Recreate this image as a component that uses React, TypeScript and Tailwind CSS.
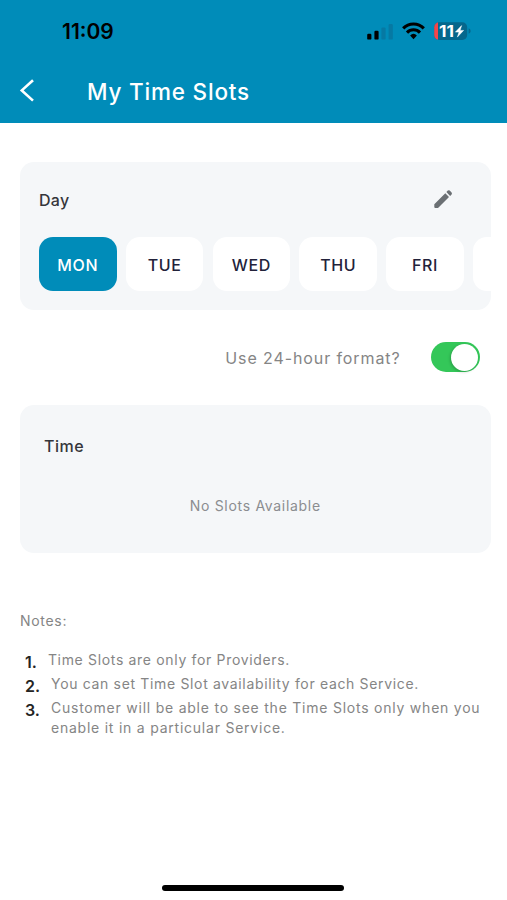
import { useState } from 'react';

const days = ['MON', 'TUE', 'WED', 'THU', 'FRI'];

const notes = [
  { text: 'Time Slots are only for Providers.', tracking: 'tracking-[0.67px]' },
  { text: 'You can set Time Slot availability for each Service.', tracking: 'tracking-[0.66px]' },
  {
    text: 'Customer will be able to see the Time Slots only when you enable it in a particular Service.',
    tracking: 'tracking-[0.77px]',
  },
];

function StatusIcons() {
  return (
    <svg width="106" height="20" viewBox="0 0 106 20" className="shrink-0">
      {/* Cellular signal, two of four bars */}
      <rect x="1.2" y="12.8" width="4.2" height="5.8" rx="1.2" fill="#000" />
      <rect x="8.4" y="9.8" width="4.2" height="8.8" rx="1.2" fill="#000" />
      <rect x="15.4" y="6.4" width="4.2" height="12.2" rx="1.2" fill="#0679a3" />
      <rect x="22.6" y="3" width="4.2" height="15.6" rx="1.2" fill="#0679a3" />
      {/* Wifi */}
      <g fill="none" stroke="#000" strokeWidth="3.1">
        <path d="M37.2 7.4a14.2 14.2 0 0 1 20.6 0" />
        <path d="M41 11.6a9 9 0 0 1 13 0" />
      </g>
      <path d="M47.5 18.2l-3.4-3.8a5 5 0 0 1 6.8 0z" fill="#000" />
      {/* Battery */}
      <clipPath id="battery">
        <rect x="68.2" y="1.2" width="33" height="17.8" rx="5" />
      </clipPath>
      <g clipPath="url(#battery)">
        <rect x="68" y="1" width="34" height="18.5" fill="#05678c" />
        <rect x="68" y="1" width="4" height="18.500" fill="#f3474a" />
      </g>
      <path d="M102.6 7.200v5.600c1.200-.5 2-1.500 2-2.800s-.8-2.300-2-2.800z" fill="#05678c" />
      <text
        x="73"
        y="15.600"
        fill="#fff"
        fontSize="16"
        fontWeight="700"
        textLength="15"
        lengthAdjust="spacingAndGlyphs"
        className="font-['Inter',sans-serif]"
      >
        11
      </text>
      <path d="M95.600 4.600l-6.200 6.500h3.600l-1.600 5 6.200-6.700h-3.500z" fill="#fff" stroke="#fff" strokeWidth=".5" />
    </svg>
  );
}

export default function App() {
  const [selectedDay, setSelectedDay] = useState('MON');
  const [use24Hour, setUse24Hour] = useState(true);

  return (
    <div className="flex h-[900px] w-[507px] flex-col overflow-hidden bg-white font-['Inter','Liberation_Sans',sans-serif] text-[#35363b]">
      <header className="h-[123px] shrink-0 bg-[#008cb9]">
        <div className="flex h-[62px] items-center justify-between pl-[62px] pr-[35px]">
          <span className="pt-[2px] text-[21px] font-semibold text-black">11:09</span>
          <StatusIcons />
        </div>
        <div className="flex h-[58px] items-center pl-[19px]">
          <button aria-label="Back">
            <svg width="16" height="24" viewBox="0 0 16 24" fill="none" stroke="#fff" strokeWidth="2.6">
              <path d="M14 1.200L2.800 11.400l11.200 10.200" />
            </svg>
          </button>
          <h1 className="ml-[52px] whitespace-nowrap pt-px text-[22.500px] font-medium tracking-[0.8px] text-white">
            My Time Slots
          </h1>
        </div>
      </header>

      <main className="px-5">
        <section className="mt-[38.500px] h-[148px] w-[470.500px] overflow-hidden rounded-[14px] bg-[#f5f7f9] pl-[19px]">
          <div className="flex h-[75.500px] items-center justify-between pr-[36px]">
            <h2 className="pt-px text-[16px] font-medium tracking-[0.3px]">Day</h2>
            <button aria-label="Edit day">
              <svg width="24" height="24" viewBox="0 0 24 24" fill="#6b7074">
                <path d="M3.300 17.300L14.300 6.300 18 10 7 21H4.300Q3.300 21 3.300 20zM20.600 7.400a1.500 1.500 0 0 0 0-1.900l-1.900-1.900a1.500 1.500 0 0 0-1.900 0l-1.400 1.500 3.700 3.800z" />
              </svg>
            </button>
          </div>
          <div className="flex gap-[9.300px]">
            {days.map((day) => (
              <button
                key={day}
                onClick={() => setSelectedDay(day)}
                className={`h-[54px] w-[77.500px] shrink-0 rounded-[14px] pt-px text-[16px] font-medium tracking-[0.6px] ${
                  day === selectedDay ? 'bg-[#008cb9] text-white' : 'bg-white text-[#22223a]'
                }`}
              >
                {day}
              </button>
            ))}
            {/* Edge of the next day in the strip */}
            <div className="h-[54px] w-[77.500px] shrink-0 rounded-[14px] bg-white" />
          </div>
        </section>

        <div className="flex h-[95.500px] items-center justify-end pr-[7.500px]">
          <span className="pt-px text-[16px] tracking-[0.9px] text-[#858585]">Use 24-hour format?</span>
          <button
            role="switch"
            aria-checked={use24Hour}
            aria-label="Use 24-hour format"
            onClick={() => setUse24Hour(!use24Hour)}
            className={`ml-[30px] flex h-[30px] w-[49px] items-center rounded-full p-[1.500px] ${
              use24Hour ? 'justify-end bg-[#34c759]' : 'justify-start bg-gray-300'
            }`}
          >
            <span className="size-[27px] rounded-full bg-white shadow-[-1px_1px_3px_rgba(0,0,0,0.2)]" />
          </button>
        </div>

        <section className="h-[148px] w-[470.500px] rounded-[14px] bg-[#f5f7f9] pt-[29px]">
          <h2 className="ml-6 text-[16px] font-medium leading-6 tracking-[0.5px]">Time</h2>
          <p className="mt-9 text-center text-[14px] leading-6 tracking-[0.7px] text-[#8b8d90]">No Slots Available</p>
        </section>

        <section className="mt-[58px] text-[14px] text-[#858585]">
          <h3 className="leading-5 tracking-[0.7px]">Notes:</h3>
          <ol className="mt-[19px]">
            {notes.map((note, index) => (
              <li key={note.text} className="mb-[3.500px] flex pl-[5px] leading-[20.300px]">
                <span className="pt-[4px] text-[16px] font-semibold leading-4 text-[#242424]">{index + 1}.</span>
                <span className={`ml-[11px] w-[436px] shrink-0 ${note.tracking}`}>{note.text}</span>
              </li>
            ))}
          </ol>
        </section>
      </main>

      <div className="mb-[9px] ml-[162px] mt-auto h-[6px] w-[181.500px] shrink-0 rounded-full bg-black" />
    </div>
  );
}
